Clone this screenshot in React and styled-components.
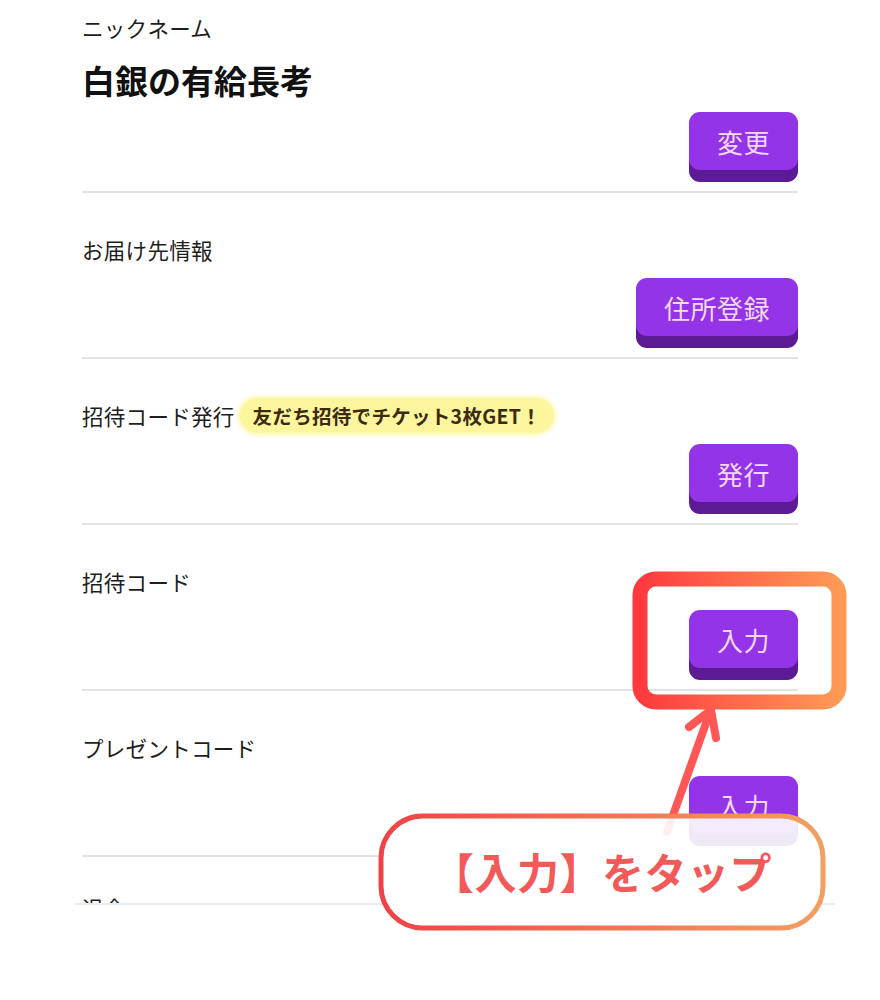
import React from 'react';
import styled, { createGlobalStyle } from 'styled-components';

const GlobalStyle = createGlobalStyle`
  html, body {
    margin: 0;
    padding: 0;
    background: #ffffff;
  }
  body {
    font-family: "Noto Sans CJK JP", "Noto Sans", sans-serif;
    color: #222;
  }
`;

const sections = [
  { label: 'お届け先情報', button: '住所登録' },
  { label: '招待コード発行', badge: '友だち招待でチケット3枚GET！', button: '発行' },
  { label: '招待コード', button: '入力' },
  { label: 'プレゼントコード', button: '入力' },
  { label: '退会', last: true },
];

function App() {
  return (
    <Page>
      <GlobalStyle />
      <Frame>
        <List>
          <Section first>
            <Label>ニックネーム</Label>
            <Nickname>白銀の有給長考</Nickname>
            <ButtonRow tight>
              <PurpleButton>変更</PurpleButton>
            </ButtonRow>
          </Section>
          {sections.map((s) => (
            <Section key={s.label} last={s.last}>
              <LabelRow>
                <Label>{s.label}</Label>
                {s.badge && <Badge>{s.badge}</Badge>}
              </LabelRow>
              {s.button && (
                <ButtonRow>
                  <PurpleButton>{s.button}</PurpleButton>
                </ButtonRow>
              )}
            </Section>
          ))}
        </List>
      </Frame>

      <Highlight width="216" height="140" viewBox="0 0 216 140">
        <defs>
          <linearGradient id="hl" x1="0" x2="1" y1="0" y2="0">
            <stop offset="0" stopColor="#ff3a3f" />
            <stop offset="1" stopColor="#ff9a56" />
          </linearGradient>
        </defs>
        <rect x="8" y="8" width="199" height="123" rx="16" fill="none" stroke="url(#hl)" strokeWidth="15" />
      </Highlight>

      <Arrow width="80" height="140" viewBox="0 0 80 140">
        <g stroke="#ff5656" strokeWidth="8" strokeLinecap="round" strokeLinejoin="round" fill="none">
          <line x1="48" y1="14" x2="5" y2="134" />
          <polyline points="27,29 49,12 54,40" />
        </g>
      </Arrow>

      <Callout>
        <CalloutFrame width="448" height="118" viewBox="0 0 448 118">
          <defs>
            <linearGradient id="co" x1="0" x2="1" y1="0" y2="0">
              <stop offset="0" stopColor="#ef4246" />
              <stop offset="1" stopColor="#f2a060" />
            </linearGradient>
          </defs>
          <rect x="3" y="3" width="442" height="112" rx="42" fill="rgba(255,255,255,0.9)" stroke="url(#co)" strokeWidth="5" />
        </CalloutFrame>
        <CalloutText>【入力】をタップ</CalloutText>
      </Callout>
    </Page>
  );
}

const Page = styled.div`
  position: relative;
  width: 880px;
  height: 1000px;
  padding-left: 75px;
  box-sizing: border-box;
  overflow: hidden;
`;

const Frame = styled.div`
  width: 760px;
  height: 905px;
  padding-left: 7px;
  box-sizing: border-box;
  overflow: hidden;
  border-bottom: 2px solid #ececec;
`;

const List = styled.div`
  width: 716px;
  display: flex;
  flex-direction: column;
`;

const Section = styled.div`
  display: flex;
  flex-direction: column;
  padding: ${(p) => (p.first ? '12px' : p.last ? '35px' : '41px')} 0 9px;
  border-bottom: 2px solid #e3e3e3;
`;

const LabelRow = styled.div`
  display: flex;
  align-items: center;
  gap: 5px;
  height: 31px;
`;

const Label = styled.div`
  font-size: 21.5px;
  line-height: 31px;
  color: #1e1e1e;
  letter-spacing: 0.3px;
`;

const Nickname = styled.div`
  margin-top: 14px;
  font-size: 33px;
  line-height: 46px;
  font-weight: 700;
  color: #111;
`;

const Badge = styled.div`
  height: 35px;
  display: flex;
  align-items: center;
  padding: 0 13px;
  border-radius: 18px;
  background: #fdf69c;
  box-shadow: 0 0 4px 2px rgba(253, 246, 156, 0.8);
  font-size: 19.5px;
  font-weight: 700;
  color: #3b2b12;
  white-space: nowrap;
  letter-spacing: 0.3px;
`;

const ButtonRow = styled.div`
  display: flex;
  justify-content: flex-end;
  margin-top: ${(p) => (p.tight ? '9px' : '13px')};
  padding-bottom: 12px;
`;

const PurpleButton = styled.div`
  height: 58px;
  padding: 0 28px;
  display: flex;
  align-items: center;
  justify-content: center;
  border-radius: 11px;
  background: #9334e8;
  box-shadow: 0 12px 0 #5c1a95;
  color: #f6d8f6;
  font-size: 26px;
  letter-spacing: 0.5px;
`;

const Highlight = styled.svg`
  position: absolute;
  left: 632px;
  top: 571px;
`;

const Arrow = styled.svg`
  position: absolute;
  left: 662px;
  top: 698px;
`;

const Callout = styled.div`
  position: absolute;
  left: 378px;
  top: 813px;
  width: 448px;
  height: 118px;
  display: flex;
  align-items: center;
  justify-content: center;
`;

const CalloutFrame = styled.svg`
  position: absolute;
  left: 0;
  top: 0;
`;

const CalloutText = styled.div`
  position: relative;
  font-size: 42px;
  font-weight: 700;
  color: #f25a5a;
  letter-spacing: 0.5px;
  margin-top: -4px;
`;

export default App;
